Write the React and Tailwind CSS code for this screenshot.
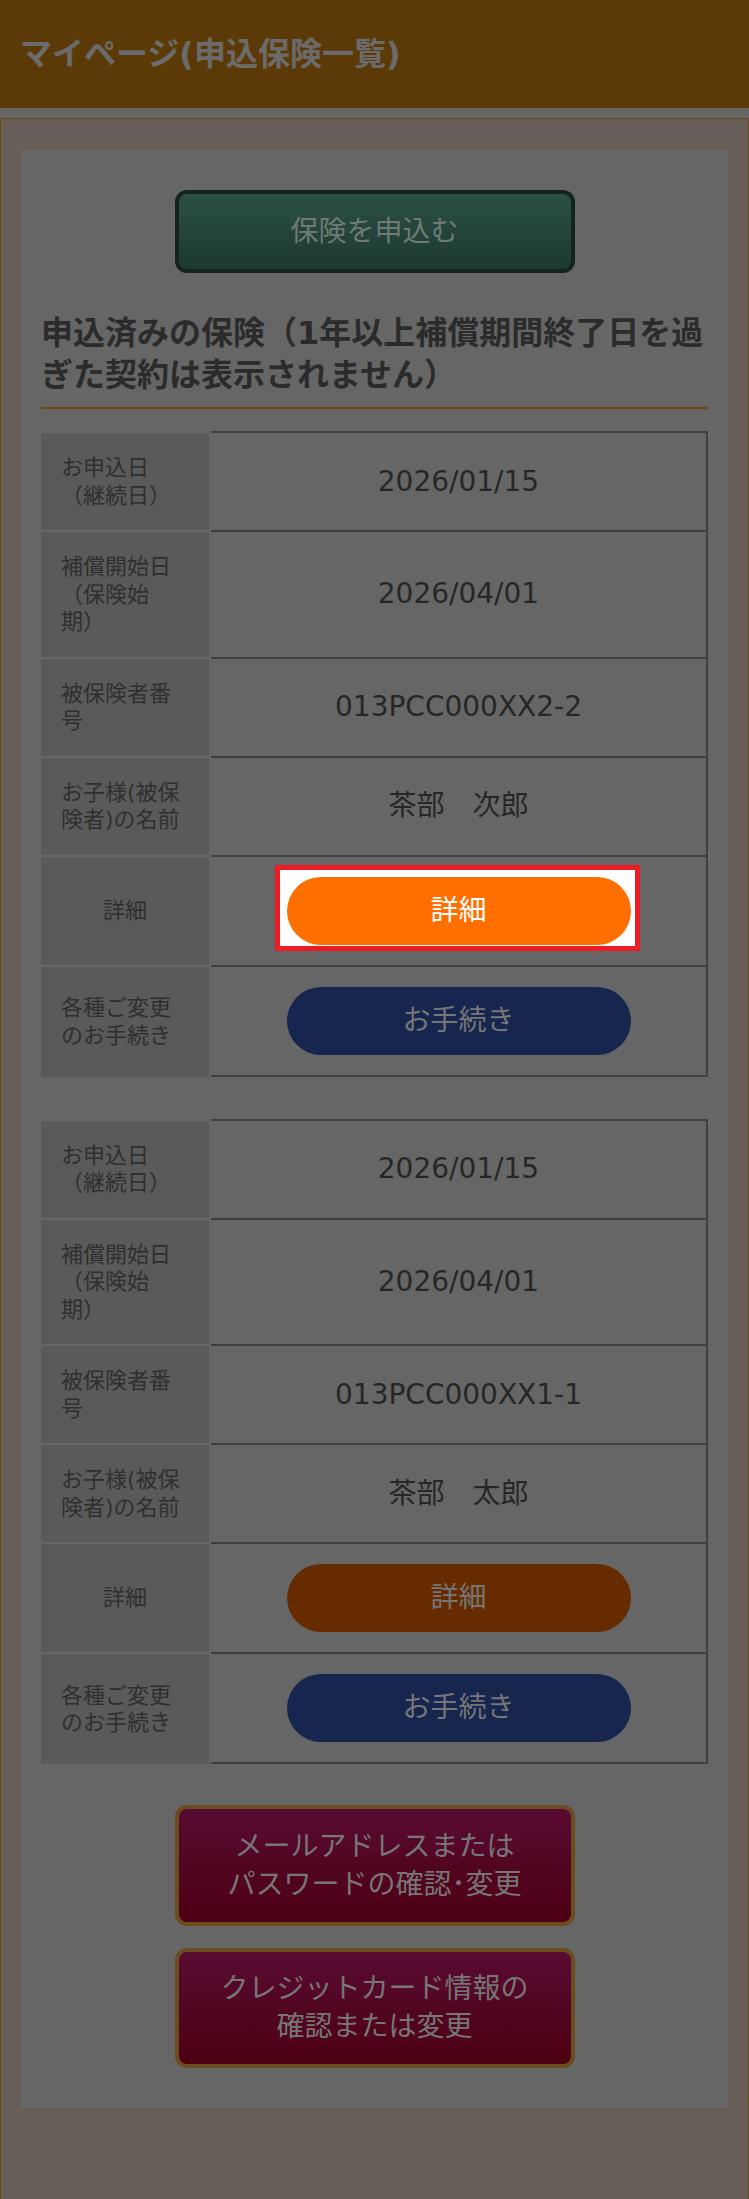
import React from "react";

const FONT = { fontFamily: "'DejaVu Sans', 'Noto Sans CJK JP', sans-serif" };

function Row({ label, center, children, last, tall }) {
  return (
    <div className="flex items-stretch">
      <div
        className={
          "w-[168px] shrink-0 border-t-2 border-[#666666] bg-[#5a5a5a] pl-5 pr-5 py-[21px] flex items-center text-[22px] leading-[27.5px] text-[#2f2f2f] " +
          (center ? "justify-center text-center" : "")
        }
      >
        <div>{label}</div>
      </div>
      <div
        className={
          "ml-[2px] flex-1 border-t-2 border-r-2 border-[#404040] flex items-center justify-center text-[28px] text-[#262626] " +
          (last ? "border-b-2 " : "") +
          (tall ? "py-5" : "")
        }
      >
        {children}
      </div>
    </div>
  );
}

function Pill({ className, children }) {
  return (
    <div
      className={
        "w-[344px] h-[68px] rounded-full flex items-center justify-center text-[28px] " +
        className
      }
    >
      {children}
    </div>
  );
}

function Table({ number, name, highlight }) {
  return (
    <div className="flex flex-col">
      <Row label="お申込日（継続日）">2026/01/15</Row>
      <Row label="補償開始日（保険始期）">2026/04/01</Row>
      <Row label="被保険者番号">{number}</Row>
      <Row label="お子様(被保険者)の名前">{name}</Row>
      <Row label="詳細" center tall>
        {highlight ? (
          <div className="relative">
            <div className="absolute -left-[12px] -top-[12px] -right-[9px] -bottom-[6px] border-[5px] border-[#ed1c24] bg-white"></div>
            <Pill className="relative bg-[#ff6f00] text-white">詳細</Pill>
          </div>
        ) : (
          <Pill className="bg-[#662c00] text-[#767676]">詳細</Pill>
        )}
      </Row>
      <Row label="各種ご変更のお手続き" tall last>
        <Pill className="bg-[#17264f] text-[#767676]">お手続き</Pill>
      </Row>
    </div>
  );
}

export default function App() {
  return (
    <div style={FONT} className="w-[749px] min-h-[2199px] bg-[#665e57] [text-spacing-trim:space-all]">
      <div className="h-[108px] bg-[#5b3a08] flex items-center pl-[20px]">
        <h1 className="text-[32px] font-bold text-[#6b6b6b] leading-none">
          マイページ(申込保険一覧)
        </h1>
      </div>
      <div className="h-[10px] bg-[#666666]"></div>
      <div className="border border-[#6b4a14] bg-[#665e57] px-5 pt-[31px] pb-[91px]">
        <div className="bg-[#666666] px-5 pt-10 pb-10">
          <div className="flex justify-center">
            <div className="w-[400px] h-[83px] rounded-[12px] border-4 border-[#13241f] bg-gradient-to-b from-[#2b5046] to-[#1d3932] flex items-center justify-center text-[28px] text-[#6f7a75]">
              保険を申込む
            </div>
          </div>
          <h2 className="mt-[39px] text-[32px] font-bold leading-[42px] text-[#2b2b2b] pb-[11px] border-b-2 border-[#6e4a10]">
            申込済みの保険（1年以上補償期間終了日を過
            <br />
            ぎた契約は表示されません）
          </h2>
          <div className="mt-[22px]">
            <Table number="013PCC000XX2-2" name="茶部　次郎" highlight />
          </div>
          <div className="mt-[42px]">
            <Table number="013PCC000XX1-1" name="茶部　太郎" />
          </div>
          <div className="mt-[41px] flex flex-col items-center gap-[22px]">
            <div className="w-[400px] h-[121px] rounded-[12px] border-4 border-[#6b4c1e] bg-gradient-to-b from-[#580b31] to-[#4d0011] flex items-center justify-center text-center text-[28px] leading-[38px] text-[#767676]">
              <div>
                メールアドレスまたは
                <br />
                パスワードの確認･変更
              </div>
            </div>
            <div className="w-[400px] h-[120px] rounded-[12px] border-4 border-[#6b4c1e] bg-gradient-to-b from-[#580b31] to-[#4d0011] flex items-center justify-center text-center text-[28px] leading-[38px] text-[#767676]">
              <div>
                クレジットカード情報の
                <br />
                確認または変更
              </div>
            </div>
          </div>
        </div>
      </div>
    </div>
  );
}
